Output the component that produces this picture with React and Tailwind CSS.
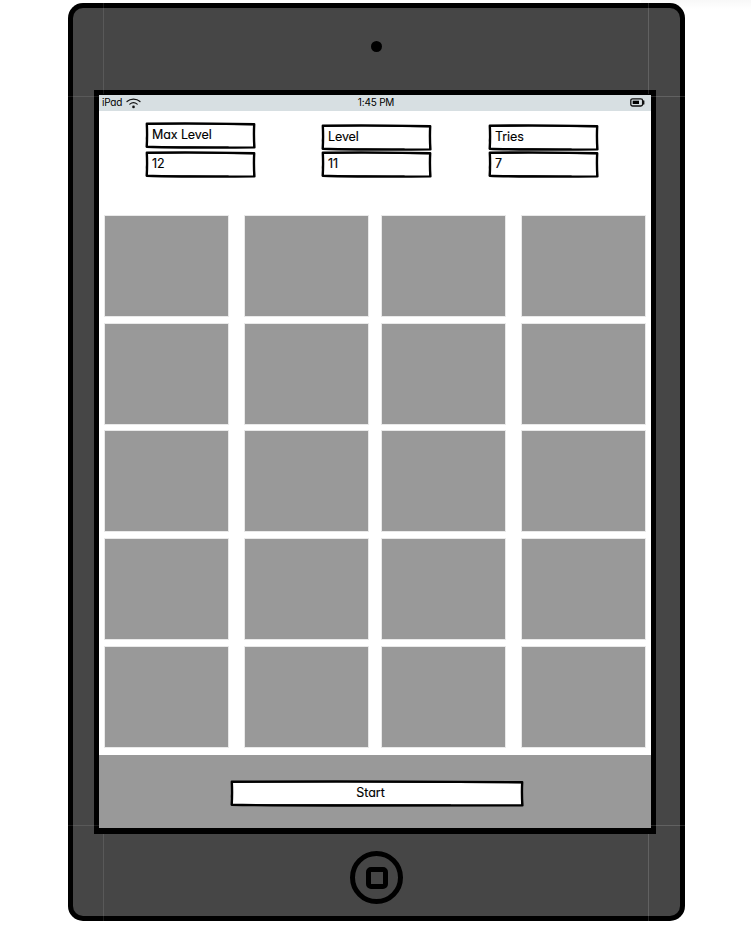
const FONT = "font-['Inter','Noto_Sans',sans-serif] [font-feature-settings:'cv11','ss03'] text-black";

// Hand-drawn rectangle outline; heavier in places like a marker stroke.
function SketchFrame({ w, h }) {
  const r = w - 1.8;
  const b = h - 1.6;
  return (
    <svg className="absolute inset-0" width={w} height={h} viewBox={`0 0 ${w} ${h}`} fill="none" stroke="#000" strokeLinecap="round" strokeLinejoin="round">
      <path fill="#fff" strokeWidth="2.4" d={`M1.8 1.7 Q${w * 0.35} 1.2 ${w * 0.6} 1.6 T${r} 2.2 Q${r - 0.6} ${h / 2} ${r + 0.2} ${b} Q${w * 0.7} ${b + 0.3} ${w * 0.4} ${b + 0.1} T1.7 ${b - 0.6} Q2.4 ${h / 2} 1.8 1.7Z`} />
      <path strokeWidth="1.1" d={`M2.2 2.2 L${w * 0.4} 2 L${r} 2.7 L${r - 0.3} ${b} M${w * 0.75} ${b - 0.3} L2 ${b - 0.7} L1.4 ${h * 0.6} L2.4 2`} />
    </svg>
  );
}

function Field({ children }) {
  return (
    <div className="relative h-[27px] w-[111px]">
      <SketchFrame w={111} h={27} />
      <span className="absolute left-[7.5px] top-[4px] whitespace-nowrap text-[12.5px] leading-[18px] tracking-[-0.1px] [-webkit-text-stroke:0.15px_#000]">{children}</span>
    </div>
  );
}

function WifiIcon() {
  return (
    <svg width="15" height="11" viewBox="0 0 15 11" fill="none" stroke="#111" strokeLinecap="round">
      <path strokeWidth="1.2" d="M1 3.5C4.5 .2 10.5.2 14 3.5M3.8 6.1C6 4.2 9 4.2 11.2 6.1" />
      <circle cx="7.5" cy="8.9" r="1.3" fill="#111" stroke="none" />
    </svg>
  );
}

function BatteryIcon() {
  return (
    <svg width="15" height="9" viewBox="0 0 15 9" fill="none">
      <rect x=".8" y=".8" width="11.8" height="7.2" rx="1.8" stroke="#111" strokeWidth="1.3" />
      <rect x="2.7" y="2.7" width="6.3" height="3.3" fill="#000" />
      <path d="M13.7 3v3" stroke="#111" strokeWidth="1.4" strokeLinecap="round" />
    </svg>
  );
}

function Guides() {
  return (
    <>
      <i className="absolute left-[35px] top-0 h-[91px] w-px bg-[#fff]/10" />
      <i className="absolute left-[580px] top-0 h-[91px] w-px bg-[#fff]/15" />
      <i className="absolute bottom-0 left-[35px] h-[87px] w-px bg-[#fff]/10" />
      <i className="absolute bottom-0 left-[580px] h-[87px] w-px bg-[#fff]/15" />
      <i className="absolute left-0 top-[93px] h-px w-[31px] bg-[#fff]/10" />
      <i className="absolute right-0 top-[93px] h-px w-[34px] bg-[#fff]/15" />
      <i className="absolute left-0 top-[822px] h-px w-[31px] bg-[#fff]/10" />
      <i className="absolute right-0 top-[822px] h-px w-[34px] bg-[#fff]/15" />
    </>
  );
}

export default function App() {
  return (
    <div className={`relative h-[948px] w-[751px] overflow-hidden bg-white pl-[68px] pt-[3px] ${FONT}`}>
      <div className="absolute right-0 top-0 h-[9px] w-[110px] bg-gradient-to-b from-[#f8f8f8] to-white" />
      <div className="relative flex h-[918px] w-[617px] flex-col rounded-[15px] bg-black p-[5px]">
        <div className="flex flex-1 flex-col items-center rounded-[10px] bg-[#464646]">
          <div className="flex h-[82px] items-center pb-[5px]">
            <div className="h-[11px] w-[11px] rounded-full bg-black" />
          </div>
          <div className="ml-[21px] flex h-[744px] w-[562px] flex-col self-start border-x-[5px] border-b-[6px] border-t-[5px] border-black bg-white">
            <div className="grid h-[16px] shrink-0 grid-cols-3 items-center bg-[#d7dfe2] pl-[3px] pr-[6px] text-[10px]">
              <div className="flex items-center gap-[4px]">
                <span className="-mt-[2px] leading-[16px] tracking-[-0.2px]">iPad</span>
                <WifiIcon />
              </div>
              <span className="-mt-[2px] pl-[5px] text-center leading-[16px] tracking-[-0.2px]">1:45 PM</span>
              <div className="-mt-px flex justify-end"><BatteryIcon /></div>
            </div>

            <div className="flex h-[105px] shrink-0 pl-[45.5px] pt-[11px]">
              <div className="mr-[65px] flex flex-col gap-[2px]">
                <Field>Max Level</Field>
                <Field>12</Field>
              </div>
              <div className="mr-[56px] flex flex-col pt-[2px]">
                <Field>Level</Field>
                <Field>11</Field>
              </div>
              <div className="flex flex-col pt-[2px]">
                <Field>Tries</Field>
                <Field>7</Field>
              </div>
            </div>

            <div className="grid shrink-0 grid-cols-[140px_137px_140px_123px] grid-rows-[108px_107px_108px_108px_108px] pl-[6px]">
              {Array.from({ length: 20 }, (_, i) => (
                <div key={i} className="h-[100px] w-[123px] bg-[#999] shadow-[0_0_0_1px_#e9e9e9]" />
              ))}
            </div>

            <div className="flex flex-1 justify-center bg-[#999] pl-[3px] pt-[25px]">
              <div className="relative h-[27px] w-[294px]">
                <SketchFrame w={294} h={27} />
                <span className="absolute inset-x-0 top-[4px] pr-[12px] text-center text-[12.5px] leading-[18px] [-webkit-text-stroke:0.15px_#000]">Start</span>
              </div>
            </div>
          </div>
          <div className="mt-[17px] flex h-[53px] w-[53px] items-center justify-center rounded-full border-[5px] border-black">
            <div className="h-[22px] w-[22px] rounded-[5px] border-[5px] border-black" />
          </div>
        </div>
        <Guides />
      </div>
    </div>
  );
}
